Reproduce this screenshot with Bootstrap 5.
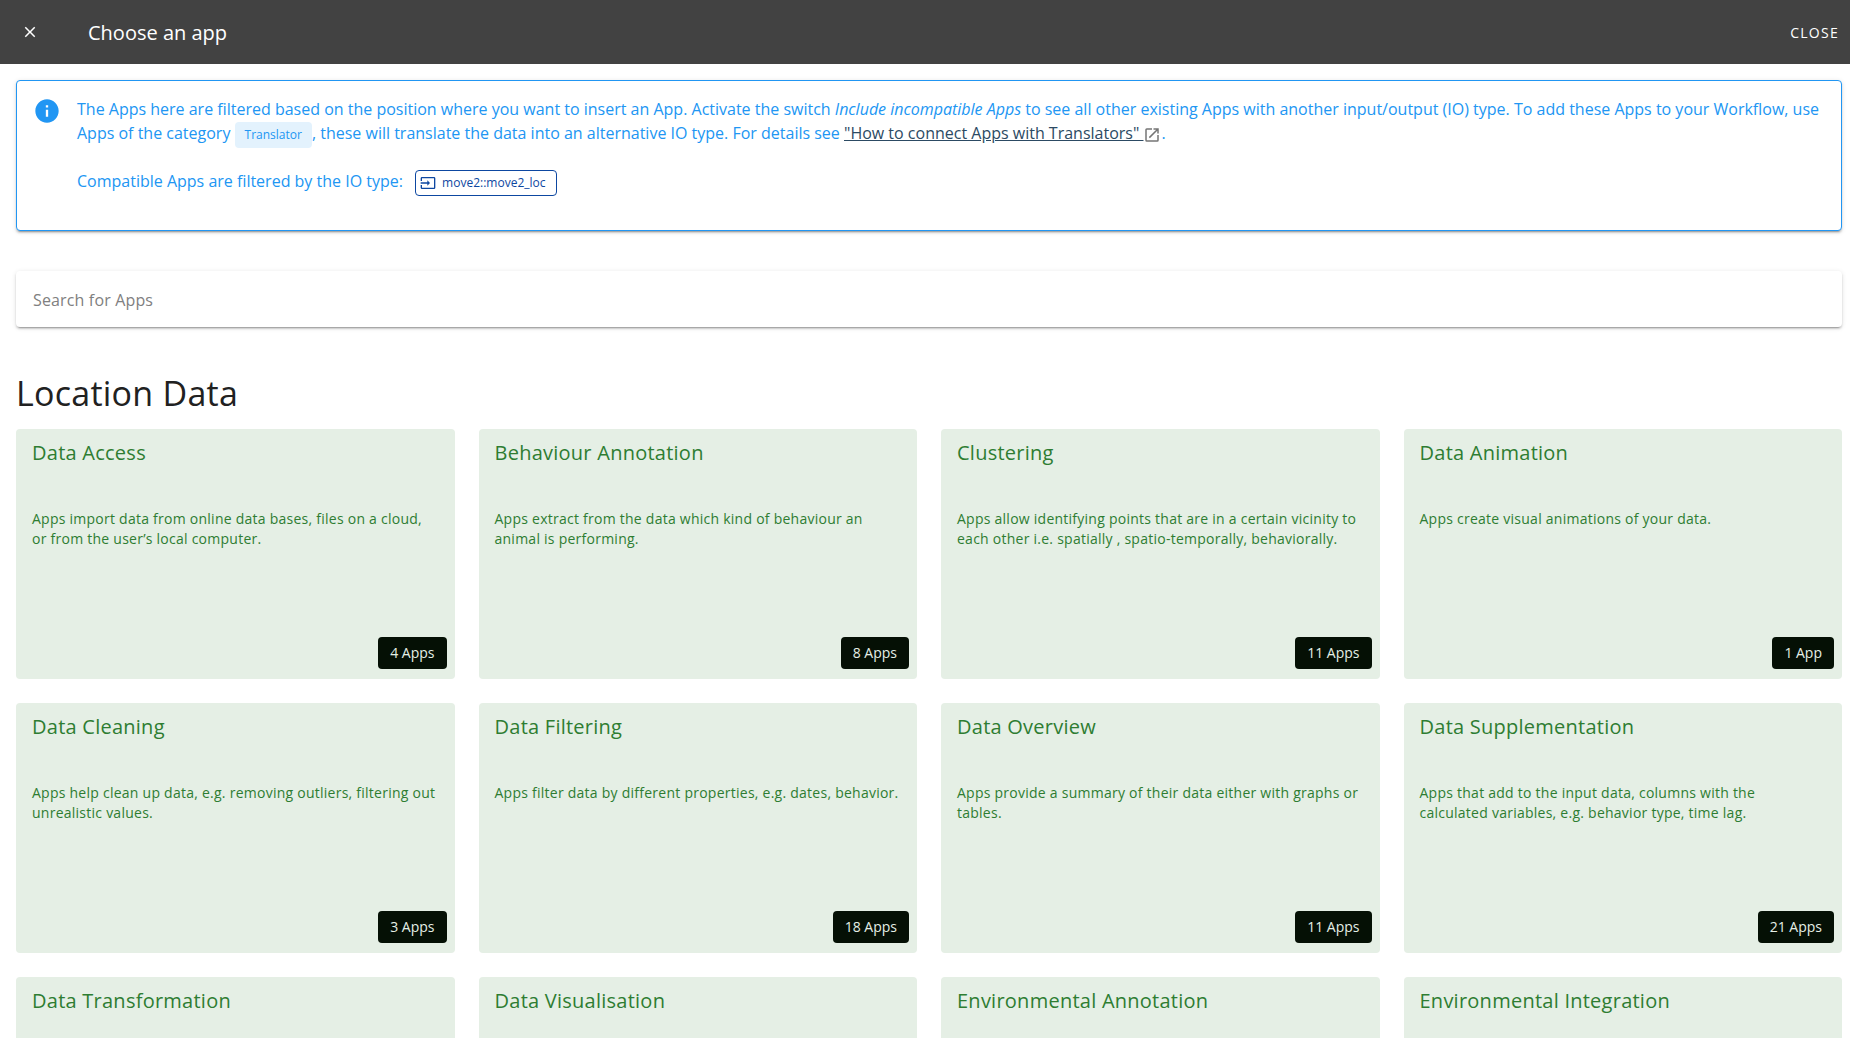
<!DOCTYPE html>
<html lang="en">
<head>
<meta charset="utf-8">
<meta name="viewport" content="width=device-width, initial-scale=1">
<title>Choose an app</title>
<link href="https://cdn.jsdelivr.net/npm/bootstrap@5.3.0/dist/css/bootstrap.min.css" rel="stylesheet">
<style>
  body { font-family: "Open Sans", "Noto Sans", sans-serif; font-size: 16px; line-height: 24px; color: #212121; background: #fff; }
  svg { fill: currentColor; flex: none; }
  .app-bar { background: #424242; color: #fff; min-height: 64px; padding: 0 6px; }
  .app-bar .btn { color: #fff; }
  .bar-icon { width: 48px; height: 48px; padding: 0; }
  .bar-title { font-size: 20px; line-height: 28px; font-weight: 400; margin: 0 0 0 34px; padding-top: 2px; }
  .bar-close { font-size: 14px; line-height: 20px; letter-spacing: .09em; text-transform: uppercase; padding: 9px 4px 7px; }
  .page-body { padding: 16px 8px 0 16px; scrollbar-width: none; }
  .page-body::-webkit-scrollbar { display: none; }
  .raised { border-radius: 4px; box-shadow: 0 3px 1px -2px rgba(0,0,0,.2), 0 2px 2px 0 rgba(0,0,0,.14), 0 1px 5px 0 rgba(0,0,0,.12); }
  .notice { border: 1px solid #2196f3; color: #2196f3; background: #fff; gap: 16px; padding: 16px 16px 37px; margin-bottom: 40px; }
  .notice p { margin-bottom: 24px; }
  .notice p:last-child { margin-bottom: 0; }
  .notice a { color: #2c4a63; }
  .notice a:hover { color: #0d47a1; }
  .ext { color: #757575; vertical-align: -5px; }
  .chip { display: inline-flex; align-items: center; height: 26px; border-radius: 4px; font-size: 12px; line-height: 18px; vertical-align: middle; margin: -4px 0; }
  .chip-soft { background: #e3f2fd; padding: 0 10px; }
  .chip-line { border: 1px solid #0d47a1; color: #0d47a1; padding: 0 10px 0 4px; gap: 6px; margin-left: 8px; }
  .app-search { margin-bottom: 46px; }
  .app-search > .form-control { height: 56px; min-height: 56px; border: 0; color: #212121; background: #fff; padding-left: 16px; padding-right: 16px; }
  .app-search > label { padding: 16px; color: #808080; letter-spacing: .0094em; }
  .group-title { font-size: 34px; line-height: 40px; font-weight: 400; letter-spacing: .0074em; margin-bottom: 16px; }
  .tile { background: #e5efe5; color: #2e7d32; border: 0; border-radius: 4px; min-height: 250px; padding: 8px 8px 10px 16px; text-decoration: none; }
  .tile-title { font-size: 20px; line-height: 32px; font-weight: 500; letter-spacing: .0125em; margin-bottom: 40px; }
  .tile-text { font-size: 14px; line-height: 20px; letter-spacing: .0178em; margin: 0 8px 8px 0; }
  .count { background: #051005; color: #e5efe5; border-radius: 4px; font-size: 14px; line-height: 20px; padding: 6px 12px; }
</style>
</head>
<body>
<div class="d-flex flex-column vh-100">
  <header class="app-bar d-flex align-items-center">
    <button type="button" class="btn bar-icon d-flex align-items-center justify-content-center" aria-label="Dismiss">
      <svg width="18" height="18" viewBox="0 0 24 24"><path d="M19 6.41 17.59 5 12 10.59 6.41 5 5 6.41 10.59 12 5 17.59 6.41 19 12 13.41 17.59 19 19 17.59 13.41 12z"/></svg>
    </button>
    <h1 class="bar-title">Choose an app</h1>
    <button type="button" class="btn bar-close ms-auto">Close</button>
  </header>

  <main class="page-body flex-fill overflow-auto">
    <section class="notice raised d-flex align-items-start">
      <svg width="28" height="28" viewBox="0 0 24 24"><path d="M12 2C6.48 2 2 6.48 2 12s4.480 10 10 10 10-4.480 10-10S17.520 2 12 2zm1 15h-2v-6h2v6zm0-8h-2V7h2v2z"/></svg>
      <div>
        <p>The Apps here are filtered based on the position where you want to insert an App. Activate the switch <em>Include incompatible Apps</em> to see all other existing Apps with another input/output (IO) type. To add these Apps to your Workflow, use Apps of the category <span class="chip chip-soft">Translator</span>, these will translate the data into an alternative IO type. For details see <a href="#">"How to connect Apps with Translators"&nbsp;</a><svg class="ext" width="18" height="18" viewBox="0 0 24 24"><path d="M14 3v2h3.590l-9.830 9.830 1.410 1.410L19 6.410V10h2V3m-2 16H5V5h7V3H5a2 2 0 0 0-2 2v14a2 2 0 0 0 2 2h14a2 2 0 0 0 2-2v-7h-2v7z"/></svg>.</p>
        <p>Compatible Apps are filtered by the IO type: <span class="chip chip-line"><svg width="16" height="16" viewBox="0 0 24 24"><path d="M21 3H3a2 2 0 0 0-2 2v4h2V5h18v14H3v-4H1v4a2 2 0 0 0 2 2h18a2 2 0 0 0 2-2V5a2 2 0 0 0-2-2zM11 16l4-4-4-4v3H1v2h10z"/></svg>move2::move2_loc</span></p>
      </div>
    </section>

    <div class="form-floating app-search">
      <input type="text" id="appSearch" class="form-control raised" placeholder=" ">
      <label for="appSearch">Search for Apps</label>
    </div>

    <h2 class="group-title">Location Data</h2>
    <div class="row row-cols-1 row-cols-md-2 row-cols-lg-4 g-4">
      <div class="col"><a href="#" class="tile card"><h3 class="tile-title">Data Access</h3><p class="tile-text">Apps import data from online data bases, files on a cloud, or from the user’s local computer.</p><span class="count align-self-end mt-auto">4 Apps</span></a></div>
      <div class="col"><a href="#" class="tile card"><h3 class="tile-title">Behaviour Annotation</h3><p class="tile-text">Apps extract from the data which kind of behaviour an animal is performing.</p><span class="count align-self-end mt-auto">8 Apps</span></a></div>
      <div class="col"><a href="#" class="tile card"><h3 class="tile-title">Clustering</h3><p class="tile-text">Apps allow identifying points that are in a certain vicinity to each other i.e. spatially , spatio-temporally, behaviorally.</p><span class="count align-self-end mt-auto">11 Apps</span></a></div>
      <div class="col"><a href="#" class="tile card"><h3 class="tile-title">Data Animation</h3><p class="tile-text">Apps create visual animations of your data.</p><span class="count align-self-end mt-auto">1 App</span></a></div>
      <div class="col"><a href="#" class="tile card"><h3 class="tile-title">Data Cleaning</h3><p class="tile-text">Apps help clean up data, e.g. removing outliers, filtering out unrealistic values.</p><span class="count align-self-end mt-auto">3 Apps</span></a></div>
      <div class="col"><a href="#" class="tile card"><h3 class="tile-title">Data Filtering</h3><p class="tile-text">Apps filter data by different properties, e.g. dates, behavior.</p><span class="count align-self-end mt-auto">18 Apps</span></a></div>
      <div class="col"><a href="#" class="tile card"><h3 class="tile-title">Data Overview</h3><p class="tile-text">Apps provide a summary of their data either with graphs or tables.</p><span class="count align-self-end mt-auto">11 Apps</span></a></div>
      <div class="col"><a href="#" class="tile card"><h3 class="tile-title">Data Supplementation</h3><p class="tile-text">Apps that add to the input data, columns with the calculated variables, e.g. behavior type, time lag.</p><span class="count align-self-end mt-auto">21 Apps</span></a></div>
      <div class="col"><a href="#" class="tile card"><h3 class="tile-title">Data Transformation</h3></a></div>
      <div class="col"><a href="#" class="tile card"><h3 class="tile-title">Data Visualisation</h3></a></div>
      <div class="col"><a href="#" class="tile card"><h3 class="tile-title">Environmental Annotation</h3></a></div>
      <div class="col"><a href="#" class="tile card"><h3 class="tile-title">Environmental Integration</h3></a></div>
    </div>
  </main>
</div>
<script src="https://cdn.jsdelivr.net/npm/bootstrap@5.3.0/dist/js/bootstrap.bundle.min.js"></script>
</body>
</html>
